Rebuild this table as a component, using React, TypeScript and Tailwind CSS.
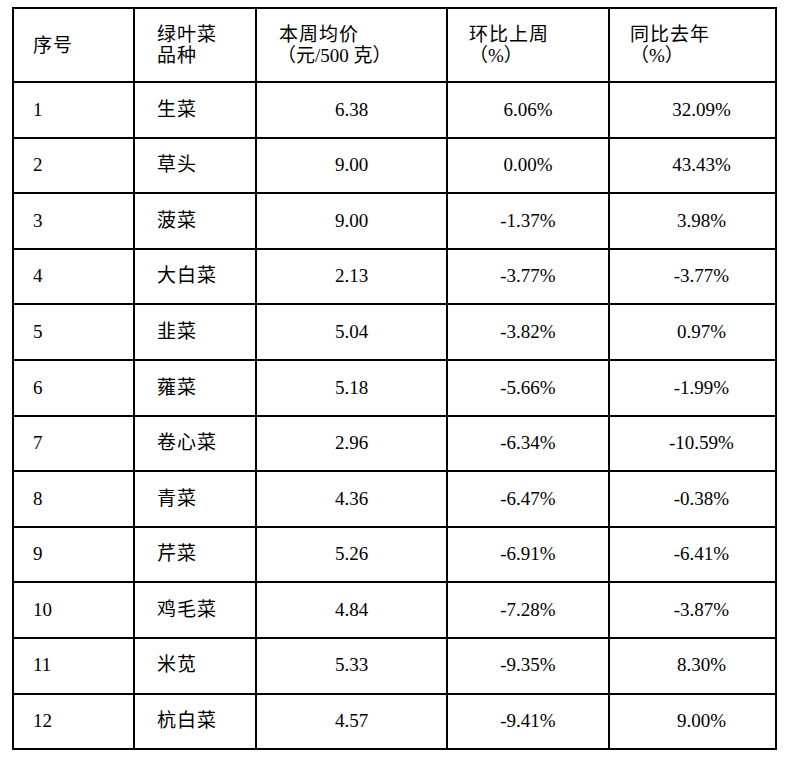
import React from "react";

type Row = {
  no: number;
  name: string;
  price: string;
  wow: string;
  yoy: string;
};

// 绿叶菜本周均价数据
const rows: Row[] = [
  { no: 1, name: "生菜", price: "6.38", wow: "6.06%", yoy: "32.09%" },
  { no: 2, name: "草头", price: "9.00", wow: "0.00%", yoy: "43.43%" },
  { no: 3, name: "菠菜", price: "9.00", wow: "-1.37%", yoy: "3.98%" },
  { no: 4, name: "大白菜", price: "2.13", wow: "-3.77%", yoy: "-3.77%" },
  { no: 5, name: "韭菜", price: "5.04", wow: "-3.82%", yoy: "0.97%" },
  { no: 6, name: "蕹菜", price: "5.18", wow: "-5.66%", yoy: "-1.99%" },
  { no: 7, name: "卷心菜", price: "2.96", wow: "-6.34%", yoy: "-10.59%" },
  { no: 8, name: "青菜", price: "4.36", wow: "-6.47%", yoy: "-0.38%" },
  { no: 9, name: "芹菜", price: "5.26", wow: "-6.91%", yoy: "-6.41%" },
  { no: 10, name: "鸡毛菜", price: "4.84", wow: "-7.28%", yoy: "-3.87%" },
  { no: 11, name: "米苋", price: "5.33", wow: "-9.35%", yoy: "8.30%" },
  { no: 12, name: "杭白菜", price: "4.57", wow: "-9.41%", yoy: "9.00%" },
];

const cell = "border-2 border-black align-middle";

export default function App() {
  return (
    <div
      className="min-h-[761px] w-[800px] bg-white pl-[12px] pt-[7px] text-[19px] text-black"
      style={{ fontFamily: '"Liberation Serif", "Noto Sans CJK SC", serif' }}
    >
      <table className="w-[763px] table-fixed border-collapse">
        <colgroup>
          <col className="w-[121px]" />
          <col className="w-[122px]" />
          <col className="w-[191px]" />
          <col className="w-[162px]" />
          <col className="w-[167px]" />
        </colgroup>
        <thead>
          <tr className="h-[74px] leading-[21px]">
            <th className={`${cell} pl-[19px] text-left font-normal tracking-[1px]`}>序号</th>
            <th className={`${cell} pl-[22px] text-left font-normal tracking-[1px]`}>
              绿叶菜
              <br />
              品种
            </th>
            <th className={`${cell} pl-[22px] text-left font-normal`}>
              <span className="tracking-[1px]">本周均价</span>
              <br />
              <span className="-ml-[2px]">（元/500 克）</span>
            </th>
            <th className={`${cell} pl-[21px] text-left font-normal`}>
              <span className="tracking-[1px]">环比上周</span>
              <br />
              （%）
            </th>
            <th className={`${cell} pl-[20px] text-left font-normal`}>
              <span className="tracking-[1px]">同比去年</span>
              <br />
              （%）
            </th>
          </tr>
        </thead>
        <tbody>
          {rows.map((r) => (
            <tr key={r.no} className="h-[55.6px]">
              <td className={`${cell} pl-[19px]`}>{r.no}</td>
              <td className={`${cell} pl-[22px] tracking-[1px]`}>{r.name}</td>
              <td className={`${cell} text-center`}>{r.price}</td>
              <td className={`${cell} text-center`}>{r.wow}</td>
              <td className={`${cell} pl-[18px] text-center`}>{r.yoy}</td>
            </tr>
          ))}
        </tbody>
      </table>
    </div>
  );
}
